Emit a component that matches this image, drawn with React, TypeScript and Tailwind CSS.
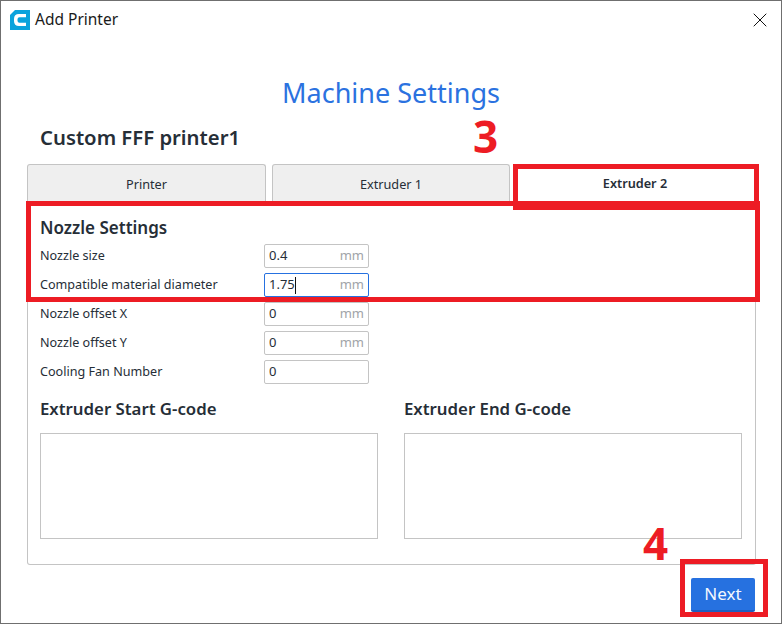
import { X } from 'lucide-react';

const fields = [
  { label: 'Nozzle size', value: '0.4', unit: 'mm' },
  { label: 'Compatible material diameter', value: '1.75', unit: 'mm', focused: true },
  { label: 'Nozzle offset X', value: '0', unit: 'mm' },
  { label: 'Nozzle offset Y', value: '0', unit: 'mm' },
  { label: 'Cooling Fan Number', value: '0' },
];

function Logo() {
  return (
    <svg width="20" height="20" viewBox="0 0 20 20">
      <path d="M5 0H20V20H0V5Z" fill="#0ba3dc" />
      <path d="M16 4H9Q4 4 4 9V11Q4 16 9 16H16V12.8H9.5Q7.5 12.8 7.5 10.8V9.2Q7.5 7.2 9.5 7.2H16Z" fill="#fff" />
    </svg>
  );
}

function Field({ label, value, unit, focused }: { label: string; value: string; unit?: string; focused?: boolean }) {
  return (
    <div className="flex h-6 items-center">
      <span className="w-[224px] text-[12.6px] text-[#262e37]">{label}</span>
      <div
        className={`flex h-6 w-[105px] items-center justify-between rounded-[2px] border pl-1 pr-1 text-[13px] ${
          focused ? 'border-[#2671e0]' : 'border-[#c4c4c4]'
        }`}
      >
        <span className="flex items-center text-[#262e37]">
          {value}
          {focused && <span className="h-[17px] w-px bg-[#111]" />}
        </span>
        {unit && <span className="text-[#a0a4a8]">{unit}</span>}
      </div>
    </div>
  );
}

function GcodeBox({ title }: { title: string }) {
  return (
    <div className="w-[338px]">
      <h3 className="mb-[9px] h-[30px] text-[16.8px] leading-[30px] font-semibold text-[#262e37]">{title}</h3>
      <div className="h-[106px] border border-[#c4c4c4]" />
    </div>
  );
}

export default function App() {
  return (
    <div
      className="relative flex h-[624px] w-[782px] flex-col border border-[#6f6f6f] bg-white"
      style={{ fontFamily: '"Noto Sans", sans-serif' }}
    >
      {/* Title bar */}
      <div className="flex h-[37px] shrink-0 items-center justify-between pr-[9px] pl-[9px]">
        <div className="flex items-center gap-[5px]">
          <Logo />
          <span className="text-[15.5px] text-[#1a1a1a]">Add Printer</span>
        </div>
        <X className="h-6 w-6 text-[#111]" strokeWidth={1} absoluteStrokeWidth />
      </div>

      <h1 className="mt-[35px] h-[40px] text-center text-[27px] leading-[40px] text-[#2b72e0]">Machine Settings</h1>

      <div className="mt-[10px] ml-[39px] h-[28px] text-[20.3px] leading-[28px] font-semibold text-[#262e37]">
        Custom FFF printer1
      </div>

      {/* Tabs */}
      <div className="mt-[13px] ml-[26px] flex h-[40px] w-[729px] items-stretch">
        <div className="flex w-[239px] items-center justify-center rounded-t-[3px] border border-b-0 border-[#c4c4c4] bg-[#efefef] text-[12.7px] text-[#262e37]">
          Printer
        </div>
        <div className="ml-[6px] flex w-[238px] items-center justify-center rounded-t-[3px] border border-b-0 border-[#c4c4c4] bg-[#efefef] text-[12.7px] text-[#262e37]">
          Extruder 1
        </div>
        <div className="ml-[4px] flex flex-1 items-center justify-center text-[12.7px] font-semibold text-[#262e37]">
          Extruder 2
        </div>
      </div>

      {/* Panel */}
      <div className="ml-[26px] h-[361px] w-[729px] rounded-b-[3px] border border-t-0 border-[#c4c4c4] pl-[12px]">
        <h2 className="h-[40px] pt-[10px] text-[17px] leading-[28px] font-semibold text-[#262e37]">Nozzle Settings</h2>
        <div className="flex flex-col gap-[5px]">
          {fields.map((f) => (
            <Field key={f.label} {...f} />
          ))}
        </div>
        <div className="mt-[10px] flex gap-[26px]">
          <GcodeBox title="Extruder Start G-code" />
          <GcodeBox title="Extruder End G-code" />
        </div>
      </div>

      <div className="mt-[13px] flex justify-end pr-[26px]">
        <button className="h-[34px] w-[64px] rounded-[2px] border-b-2 border-[#1f5fc0] bg-[#2671e0] text-[17px] text-[#f4f8fe]">
          Next
        </button>
      </div>

      {/* Annotations drawn over the dialog */}
      <div className="absolute top-[163px] left-[512px] h-[46px] w-[246px] border-[5px] border-[#ed1c24]" />
      <div className="absolute top-[200px] left-[25px] h-[101px] w-[734px] border-[5px] border-[#ed1c24]" />
      <div className="absolute top-[558px] left-[679px] h-[58px] w-[88px] border-[5px] border-[#ed1c24]" />
      <span className="absolute top-[107px] left-[472px] text-[44px] leading-[56px] font-bold text-[#ed1c24]">3</span>
      <span className="absolute top-[514px] left-[642px] text-[44px] leading-[56px] font-bold text-[#ed1c24]">4</span>
    </div>
  );
}
